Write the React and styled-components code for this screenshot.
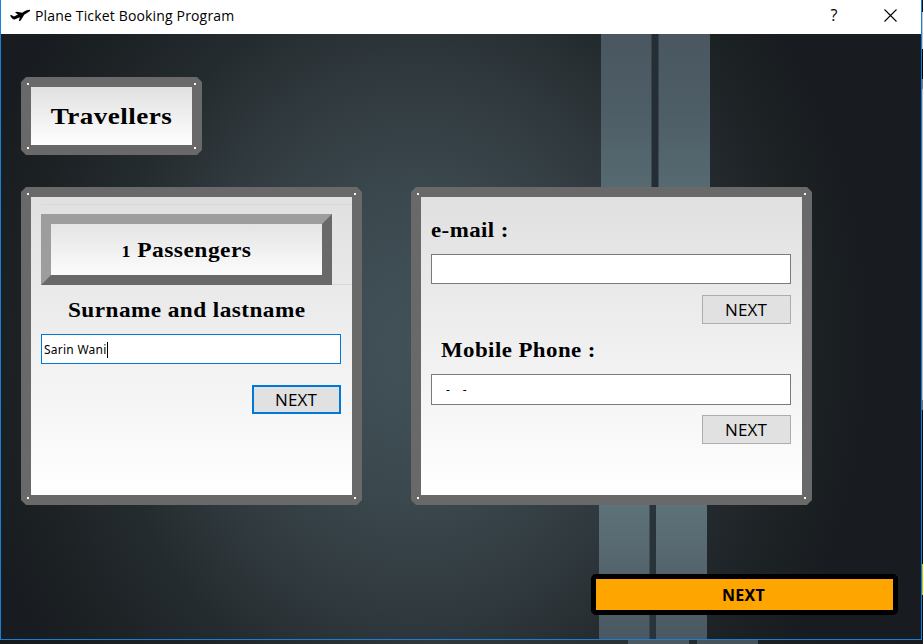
import React from "react";
import styled, { createGlobalStyle } from "styled-components";

const Global = createGlobalStyle`
  * { box-sizing: border-box; }
  body { margin: 0; background: #1b2023; overflow: hidden; }
`;

const Desktop = styled.div`
  width: 923px;
  height: 644px;
  display: grid;
  grid-template-columns: 922px 1px;
  grid-template-rows: 640px 4px;
`;

const Window = styled.main`
  display: flex;
  flex-direction: column;
  border: 1px solid #1a80d6;
  border-top: 0;
`;

const DesktopEdge = styled.div`
  background: linear-gradient(
    #111 12px, #c8cacc 12px 49px, #000 49px 79px, #7d7d7d 79px 89px,
    #b9c3c9 89px 400px, #707274 400px 410px, #080b0d 410px 564px,
    #c8c800 564px 595px, #0a0d0f 595px
  );
`;

const DesktopStrip = styled.div`
  grid-column: 1 / 3;
  background: linear-gradient(
    90deg, #15191c, #1e2426 200px, #30383c 430px, #2a3134 628px, #4b5a62 628px 689px,
    #242b30 689px 697px, #46535b 697px 758px, #1b2023 758px, #181c20
  );
`;

const TitleBar = styled.header`
  height: 34px;
  flex: none;
  padding: 0 24px 2px 8px;
  display: flex;
  align-items: center;
  background: #fff;
  color: #000;
`;

const Title = styled.h1`
  margin: 0 auto 0 4px;
  font: 400 14px/20px "Open Sans", "Noto Sans", sans-serif;
  letter-spacing: 0.16px;
`;

const HelpButton = styled.button`
  width: 20px;
  margin: 0 40px 0 0;
  padding: 0 0 2px;
  border: 0;
  background: none;
  color: #000;
  font: 400 16px/20px "Open Sans", sans-serif;
`;

const CloseButton = styled.button`
  display: flex;
  padding: 0 0 2px;
  border: 0;
  background: none;
`;

const Content = styled.section`
  flex: 1;
  display: grid;
  grid-template-columns: 341px 401px;
  grid-template-rows: 78px 350px 110px;
  column-gap: 49px;
  padding: 43px 0 0 20px;
  background:
    linear-gradient(90deg, transparent 50px, #242e34 51px 57px, transparent 58px) 600px 0 / 110px 160px no-repeat,
    linear-gradient(#4a5760, #4e5e66 50%, #576b73) 600px 0 / 109px 160px no-repeat,
    linear-gradient(90deg, transparent 50px, #29343a 51px 57px, transparent 57px) 598px 460px / 109px 145px no-repeat,
    linear-gradient(#5f747c, #55656d 50%, #4a5861) 598px 460px / 108px 145px no-repeat,
    radial-gradient(ellipse 460px 540px at 415px 310px, #425158 0%, #3c4a50 25%, #30393e 50%, #242b2e 68%, #1c2124 86%, #181c20 100%);
`;

const Frame = styled.div`
  padding: 10px;
  grid-column: ${(p) => (p.$wide ? "1 / 3" : "auto")};
  width: ${(p) => p.$width}px;
  height: ${(p) => p.$height}px;
  margin-top: ${(p) => p.$top || 0}px;
  background:
    linear-gradient(#f4f4f4 0 0) 6px 6px / 2px 2px no-repeat,
    linear-gradient(#f4f4f4 0 0) calc(100% - 6px) 6px / 2px 2px no-repeat,
    linear-gradient(#fff 0 0) 6px calc(100% - 6px) / 2px 2px no-repeat,
    linear-gradient(#fff 0 0) calc(100% - 6px) calc(100% - 6px) / 2px 2px no-repeat,
    #696969;
  clip-path: polygon(
    5px 0, calc(100% - 5px) 0, 100% 5px, 100% calc(100% - 5px),
    calc(100% - 5px) 100%, 5px 100%, 0 calc(100% - 5px), 0 5px
  );
`;

const FrameBody = styled.div`
  height: 100%;
  display: flex;
  flex-direction: column;
  padding: ${(p) => p.$pad || "0"};
  background: linear-gradient(#e0e0e0, #fff);
`;

const Heading = styled.h2`
  color: #000;
  white-space: nowrap;
  text-align: ${(p) => p.$align || "center"};
  margin: ${(p) => p.$margin || "0"};
  font: 700 ${(p) => p.$size || 21}px/${(p) => p.$line || 30}px Georgia, "Liberation Serif", serif;
  letter-spacing: 0.4px;
  transform: scaleX(${(p) => p.$stretch || 1.09});
  transform-origin: ${(p) => p.$align || "center"};
`;

const OldStyleDigit = styled.span`
  font-size: 16px;
`;

const Group = styled.div`
  height: 81px;
  flex: none;
  margin-right: -10px;
  padding-top: 9px;
  border: 1px solid #d9d9d9;
  border-right: 0;
  border-left: 0;
`;

const Bevel = styled.div`
  width: 291px;
  height: 71px;
  border: 10px solid;
  border-color: #9d9d9d #696969 #696969 #9d9d9d;
  background: linear-gradient(#e4e4e4, #fcfcfc) padding-box;
`;

const Field = styled.input`
  display: block;
  width: 100%;
  height: ${(p) => p.$height || 30}px;
  flex: none;
  margin-top: ${(p) => p.$top || 0}px;
  outline: 0;
  border: 1px solid #7a7a7a;
  padding: 0 14px 1px;
  background: #fff;
  color: #000;
  font: 400 12px "Noto Sans", sans-serif;
  letter-spacing: 0.9px;
`;

const FocusedField = styled.div`
  height: 30px;
  flex: none;
  margin-top: 4px;
  margin-right: 1px;
  display: flex;
  align-items: center;
  padding: 1px 0 0 2px;
  border: 1px solid #0078d7;
  background: #fff;
  color: #000;
  font: 400 12px/16px "Noto Sans", sans-serif;
  letter-spacing: 0.25px;
`;

const Caret = styled.span`
  width: 1px;
  height: 16px;
  background: #000;
`;

const Button = styled.button`
  align-self: flex-end;
  width: 89px;
  height: 29px;
  flex: none;
  margin: ${(p) => p.$margin};
  padding: 1px 1px 0 0;
  border: ${(p) => (p.$focused ? "2px solid #0078d7" : "1px solid #adadad")};
  background: #e1e1e1;
  color: #000;
  font: 400 17px/24px "Open Sans", sans-serif;
  letter-spacing: 0.1px;
`;

const SubmitButton = styled.button`
  grid-column: 1 / 3;
  width: 307px;
  height: 41px;
  margin: 69px 0 0 570px;
  padding: 0 2px 0 0;
  border: 5px solid #000;
  border-radius: 5px;
  background: #ffa500 padding-box;
  color: #000;
  font: 700 16px/24px "Noto Sans", sans-serif;
  letter-spacing: 0.3px;
`;

function PlaneIcon() {
  return (
    <svg width="22" height="14" viewBox="0 0 22 14" aria-hidden="true">
      <path
        d="M1 6.5 2.2 6 5 7.5 9 5.6 6 3.4 7.8 2.8 13.2 3.7C16 1.9 18.5.7 20.8.8 21.6 1 21 2 20 2.8L15.2 5.8 11.7 11.5 9.8 12.3 10.8 8.2 5.5 10.5C4.2 10.8 2.8 9.6 1 6.5Z"
        fill="#000"
      />
    </svg>
  );
}

export default function App() {
  return (
    <>
      <Global />
      <Desktop>
        <Window>
          <TitleBar>
            <PlaneIcon />
            <Title>Plane Ticket Booking Program</Title>
            <HelpButton aria-label="Help">?</HelpButton>
            <CloseButton aria-label="Close">
              <svg width="13" height="13" viewBox="0 0 13 13">
                <path d="M.5.5 12.5 12.5M12.5.5.5 12.5" stroke="#000" strokeWidth="1.1" />
              </svg>
            </CloseButton>
          </TitleBar>
          <Content>
            <Frame $wide $width={181} $height={78}>
              <FrameBody>
                <Heading $size={24} $line={59} $stretch={1.13}>Travellers</Heading>
              </FrameBody>
            </Frame>
            <Frame $width={341} $height={318} $top={32}>
              <FrameBody $pad="7px 10px 0">
                <Group>
                  <Bevel>
                    <Heading $line={53} $stretch={1.12}>
                      <OldStyleDigit>1</OldStyleDigit> Passengers
                    </Heading>
                  </Bevel>
                </Group>
                <Heading $align="left" $margin="5px 0 0 27px" $line={40} $stretch={1.107}>
                  Surname and lastname
                </Heading>
                <FocusedField>Sarin Wani<Caret /></FocusedField>
                <Button $focused $margin="21px 1px 0 0">NEXT</Button>
              </FrameBody>
            </Frame>
            <Frame $width={401} $height={318} $top={32}>
              <FrameBody $pad="18px 11px 0 10px">
                <Heading $align="left">e-mail :</Heading>
                <Field $top={9} aria-label="e-mail" />
                <Button $margin="11px 0 0">NEXT</Button>
                <Heading $align="left" $margin="2px 0 0 10px" $line={48}>Mobile Phone :</Heading>
                <Field $height={31} aria-label="Mobile Phone" defaultValue="-   -" />
                <Button $margin="10px 0 0">NEXT</Button>
              </FrameBody>
            </Frame>
            <SubmitButton>NEXT</SubmitButton>
          </Content>
        </Window>
        <DesktopEdge />
        <DesktopStrip />
      </Desktop>
    </>
  );
}
